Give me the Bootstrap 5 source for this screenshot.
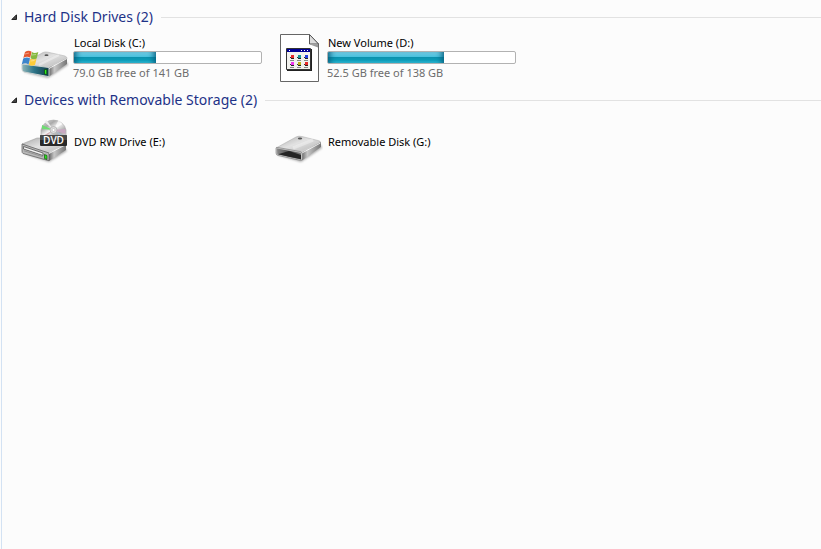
<!DOCTYPE html>
<html lang="en">
<head>
<meta charset="utf-8">
<meta name="viewport" content="width=device-width, initial-scale=1">
<title>Computer</title>
<link href="https://cdn.jsdelivr.net/npm/bootstrap@5.3.0/dist/css/bootstrap.min.css" rel="stylesheet">
<style>
  body { background: #fcfcfc; font-family: "Noto Sans", "Open Sans", sans-serif; font-size: 11px; line-height: 17px; color: #000; }
  .explorer { margin-left: 1px; border-left: 1px solid #d3e2f3; padding: 6px 0 0 9px; }
  .group-title { font-size: 14px; line-height: 22px; }
  .group-title button { font-size: 14px; line-height: 22px; color: #1e3287; gap: 7px; }
  .group-rule { height: 1px; background: #e2e2e2; }
  .drives { padding: 6px 0 7px 10px; }
  .drive { width: 254px; color: #000; gap: 4px; }
  .drive-icon { width: 48px; height: 48px; }
  .drive-label { padding-left: 1px; }
  .drive-free { color: #6d6d6d; }
  .capacity { width: 189px; height: 13px; border: 1px solid #b2b2b2; border-radius: 2px; background: #fff; }
  .capacity .progress-bar { background: linear-gradient(#7fd5ea 0, #45bfdc 45%, #0b91ad 50%, #0e9fba 75%, #35c3dc 100%); box-shadow: inset 6px 0 6px -4px #075c7c, inset -6px 0 6px -4px #075c7c; }
</style>
<script src="https://cdn.jsdelivr.net/npm/bootstrap@5.3.0/dist/js/bootstrap.bundle.min.js"></script>
</head>
<body>
<main class="explorer min-vh-100">
  <section>
    <h2 class="group-title d-flex align-items-center m-0">
      <button type="button" class="btn p-0 border-0 rounded-0 d-flex align-items-center" data-bs-toggle="collapse" data-bs-target="#hard" aria-expanded="true" aria-controls="hard">
        <svg width="6" height="6" viewBox="0 0 6 6" aria-hidden="true"><path d="M5.500.8V5.500H.8Z" fill="#444" stroke="#222"/></svg>
        <span>Hard Disk Drives (2)</span>
      </button>
      <span class="group-rule flex-grow-1 ms-2"></span>
    </h2>
    <div id="hard" class="collapse show">
      <div class="drives d-flex flex-wrap">
        <a href="#c" class="drive d-flex text-decoration-none">
          <svg class="drive-icon flex-shrink-0" viewBox="0 0 48 48" aria-hidden="true">
            <defs>
              <linearGradient id="top" x1="0" y1="0" x2="1" y2="1"><stop offset="0" stop-color="#a9a9a9"/><stop offset=".45" stop-color="#e2e2e2"/><stop offset=".7" stop-color="#cacaca"/><stop offset="1" stop-color="#f2f2f2"/></linearGradient>
              <linearGradient id="side" x1="0" y1="0" x2="1" y2="0"><stop offset="0" stop-color="#666"/><stop offset=".3" stop-color="#c7c7c7"/><stop offset="1" stop-color="#757575"/></linearGradient>
              <linearGradient id="teal" x1="0" y1="0" x2="1" y2="0"><stop offset="0" stop-color="#8fb5b9"/><stop offset=".45" stop-color="#2d7488"/><stop offset="1" stop-color="#123c48"/></linearGradient>
              <filter id="soft" x="-20%" y="-50%" width="140%" height="200%"><feGaussianBlur stdDeviation="1"/></filter>
            </defs>
            <path d="M2 38 27 44 47 31 46 28 28 39Z" fill="#777" opacity=".6" filter="url(#soft)"/>
            <path d="M1 30 22 18.500Q24 17.500 27 18.200L44 22Q46.500 23 46 25L28 35Z" fill="url(#top)" stroke="#aaa" stroke-width=".5"/>
            <path d="M28 33.500 46 24V30L28 42.500Z" fill="url(#side)"/>
            <path d="M1 30 28 33.500V42.700L3 38Q1 37.500 1 35Z" fill="url(#teal)" stroke="#c9d0d0" stroke-width="1"/>
            <path d="m18 31 20-10" stroke="#fff" stroke-width="2" opacity=".35"/>
            <path d="m28 34.500 18-10" stroke="#fff" opacity=".8"/>
            <ellipse cx="25.500" cy="21.200" rx="2" ry=".9" fill="#555"/>
            <path d="M23.500 35.500h2.300v5l-2.300-.4Z" fill="#31ef1c" stroke="#083d16" stroke-width=".7"/>
            <path d="M4 18Q7.500 15.700 10.600 17.700L9.200 23.800Q6 21.800 2.300 24Z" fill="#e4572e"/>
            <path d="M11 18.100Q13.500 20 17.300 18L15.700 24.500Q12.500 26 9.600 24.200Z" fill="#86b93f"/>
            <path d="M2.200 24.400Q6 22.500 9 24.300L7.500 30.500Q4.300 28.300 .8 30.300Z" fill="#3c85cc"/>
            <path d="M9.500 24.700Q12.500 26.300 15.500 24.800L14 31Q10.500 32.500 7.800 30.800Z" fill="#fccc3a"/>
            <path d="m4 20 4-1M11 21l4-.5M9.500 27l4-.5" stroke="#fff" opacity=".4"/>
          </svg>
          <span>
            <span class="drive-label d-block">Local Disk (C:)</span>
            <span class="capacity progress" role="progressbar" aria-label="Local Disk space used" aria-valuenow="44" aria-valuemin="0" aria-valuemax="100"><span class="progress-bar" style="width:44%"></span></span>
            <span class="drive-free d-block">79.0 GB free of 141 GB</span>
          </span>
        </a>
        <a href="#d" class="drive d-flex text-decoration-none">
          <svg class="drive-icon flex-shrink-0" viewBox="0 0 48 48" aria-hidden="true">
            <path d="M5.500.5H34.500L43.500 10V47.500H5.500Z" fill="#fff" stroke="#666"/>
            <path d="M34.500.5V10H43.500Z" fill="#ddd" stroke="#555"/>
            <path d="m35 10.500h8v3Z" fill="#999"/>
            <path d="M12 15h25v22H12Z" fill="#222"/>
            <path d="M11.500 14.500h24v21h-24Z" fill="#f1f1ed" stroke="#333"/>
            <path d="M12 15h23v3H12Z" fill="#000095"/>
            <path d="M14 16h1v1h-1ZM26 16h1v1h-1ZM29 16h1v1h-1ZM32 16h1v1h-1Z" fill="#fff"/>
            <g stroke="#888"><path d="M15 26.500h4M22 26.500h4M29 26.500h4M15 33.500h4M22 33.500h4M29 33.500h4"/></g>
            <path d="M16 22h3v3h-3ZM23 22h3v3h-3ZM30 22h3v3h-3ZM16 29h3v3h-3ZM23 29h3v3h-3ZM30 29h3v3h-3Z" fill="#222"/>
            <path d="M16 21h3v3h-3ZM30 28h3v3h-3Z" fill="#e62929"/><path d="M23 21h3v3h-3Z" fill="#169999"/><path d="M30 21h3v3h-3Z" fill="#233ee0"/><path d="M16 28h3v3h-3Z" fill="#f034ee"/><path d="M23 28h3v3h-3Z" fill="#bbb31c"/>
            <path d="M15 23h1v1h-1ZM22 23h1v1h-1ZM29 23h1v1h-1ZM15 30h1v1h-1ZM22 30h1v1h-1ZM29 30h1v1h-1Z" fill="#333"/>
          </svg>
          <span>
            <span class="drive-label d-block">New Volume (D:)</span>
            <span class="capacity progress" role="progressbar" aria-label="New Volume space used" aria-valuenow="62" aria-valuemin="0" aria-valuemax="100"><span class="progress-bar" style="width:62%"></span></span>
            <span class="drive-free d-block">52.5 GB free of 138 GB</span>
          </span>
        </a>
      </div>
    </div>
  </section>
  <section>
    <h2 class="group-title d-flex align-items-center m-0">
      <button type="button" class="btn p-0 border-0 rounded-0 d-flex align-items-center" data-bs-toggle="collapse" data-bs-target="#removable" aria-expanded="true" aria-controls="removable">
        <svg width="6" height="6" viewBox="0 0 6 6" aria-hidden="true"><path d="M5.500.8V5.500H.8Z" fill="#444" stroke="#222"/></svg>
        <span>Devices with Removable Storage (2)</span>
      </button>
      <span class="group-rule flex-grow-1 ms-2"></span>
    </h2>
    <div id="removable" class="collapse show">
      <div class="drives d-flex flex-wrap">
        <a href="#e" class="drive d-flex align-items-center text-decoration-none">
          <svg class="drive-icon flex-shrink-0" viewBox="0 0 48 48" aria-hidden="true">
            <defs><linearGradient id="disc" x1="0" y1="0" x2="1" y2="1"><stop offset="0" stop-color="#e8e8e8"/><stop offset=".3" stop-color="#aaa"/><stop offset=".5" stop-color="#f4f4f4"/><stop offset=".75" stop-color="#aaa"/><stop offset="1" stop-color="#ddd"/></linearGradient></defs>
            <path d="M3 37 28 45 46 34 44 31 28 40Z" fill="#777" opacity=".6" filter="url(#soft)"/>
            <path d="M1 27 16 21H43Q46 24 45 28L28 37Z" fill="url(#top)" stroke="#999" stroke-width=".5"/>
            <path d="M28 36 45 27V33L28 44Z" fill="url(#side)"/>
            <path d="M1 27 28 36V43.700L2 36.500Q1 36 1 34Z" fill="#b8b8b8" stroke="#666" stroke-width=".8"/>
            <path d="M2.500 29.500 22 36V38.500L2.500 32Z" fill="#f2f2f2" stroke="#555" stroke-width=".8"/>
            <path d="m3 33.800 19 6" stroke="#8b8b8b" stroke-width=".8"/>
            <path d="m28 36.500 17-9" stroke="#fff" opacity=".8"/>
            <path d="M23.500 37.500 26 38.500V42.500L23.500 41.500Z" fill="#28e71b" stroke="#174b14" stroke-width=".7"/>
            <path d="M20 20V13A12.700 12 0 0 1 45 13V20Z" fill="url(#disc)" stroke="#aaa" stroke-width=".7"/>
            <path d="m32.500 13-11.500-5v4Z" fill="#6fdc73"/><path d="m32.500 13-7-10-2 2Z" fill="#eee"/>
            <path d="m32.500 13 12 4V12Z" fill="#c9a9c2"/><path d="m32.500 13 11 6h-4Z" fill="#a9b8ce"/><path d="m32.500 13-11 6h4Z" fill="#d3b0b6"/>
            <path d="m32.500 13 5-10 4 4Z" fill="#fff" opacity=".7"/>
            <circle cx="32.500" cy="13" r="3.500" fill="#ddd" stroke="#aaa" stroke-width=".7"/><circle cx="32.500" cy="13" r="1.500" fill="#fff" stroke="#aaa" stroke-width=".5"/>
            <rect x="19" y="18" width="27" height="11" rx="1" fill="#292929"/><path d="M19 18h27v5H19Z" fill="#555" opacity=".7"/>
            <text x="32.500" y="27" text-anchor="middle" font-family="Open Sans, sans-serif" font-size="10" font-weight="600" fill="#fff">DVD</text>
          </svg>
          <span class="drive-label">DVD RW Drive (E:)</span>
        </a>
        <a href="#g" class="drive d-flex align-items-center text-decoration-none">
          <svg class="drive-icon flex-shrink-0" viewBox="0 0 48 48" aria-hidden="true">
            <defs><linearGradient id="hollow" x1="0" y1="0" x2="1" y2="0"><stop offset="0" stop-color="#888"/><stop offset=".5" stop-color="#4d4d4d"/><stop offset="1" stop-color="#777"/></linearGradient></defs>
            <path d="M2 38 26 45 47 31 46 28 28 39Z" fill="#777" opacity=".6" filter="url(#soft)"/>
            <path d="M1 31 21 20Q24 18.500 27 19.500L43 23.500Q46 24 45.500 26L27 36Z" fill="url(#top)" stroke="#aaa" stroke-width=".5"/>
            <path d="M26.500 35.500 46 25V30L27 43.500Z" fill="url(#side)"/>
            <path d="M1 31Q1 30 3 30.500L25 34.500Q27.500 35 27.500 37V42Q27 44 25 43.300L3 38.500Q1 38 1 36Z" fill="#c4c4c4" stroke="#777" stroke-width=".6"/>
            <path d="M2 31.500 25 35.700Q26.500 36 26 38.500V42.500L2.300 37.300Z" fill="url(#hollow)"/>
            <path d="M3 37.300 14 34 26 38V42.300Z" fill="#242424"/>
            <path d="m18 31 20-8" stroke="#fff" stroke-width="3" opacity=".35"/>
            <path d="m27 36 18.500-10" stroke="#fff" opacity=".8"/>
            <ellipse cx="25" cy="21.500" rx="2.200" ry="1" fill="#555"/>
          </svg>
          <span class="drive-label">Removable Disk (G:)</span>
        </a>
      </div>
    </div>
  </section>
</main>
</body>
</html>
